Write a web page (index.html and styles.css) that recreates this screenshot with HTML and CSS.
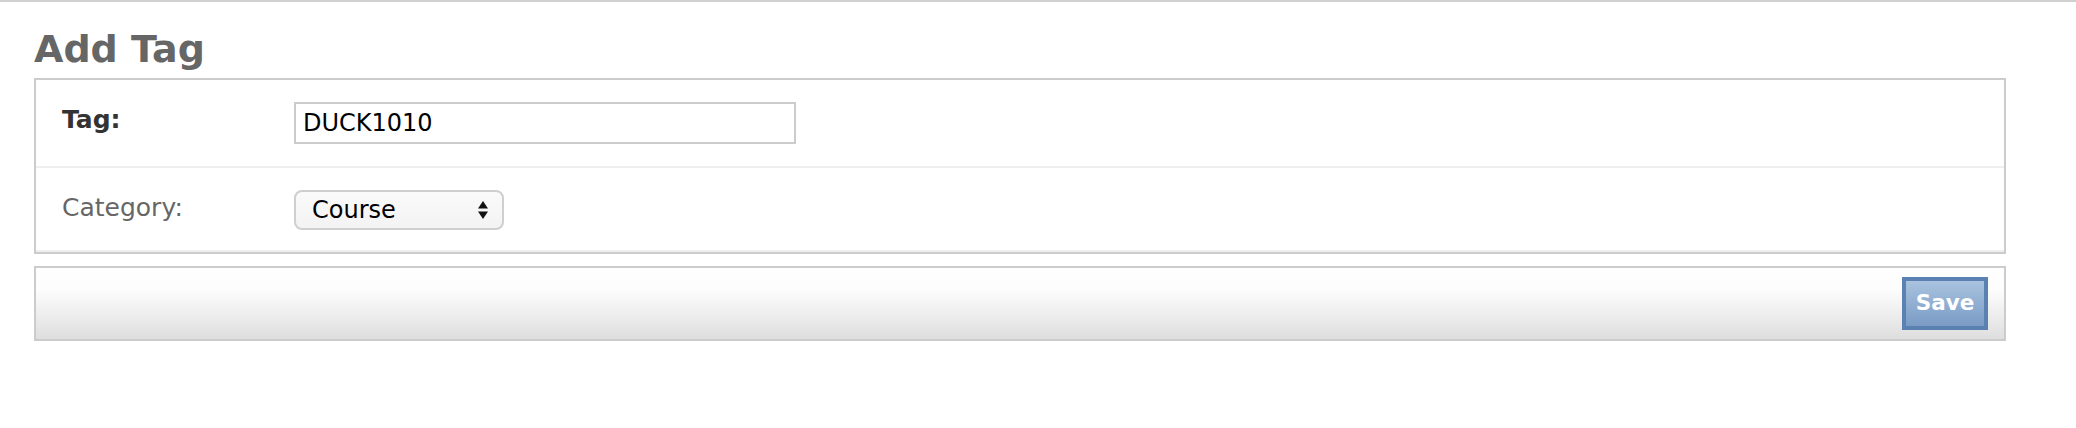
FILE: index.html
```html
<!DOCTYPE html>
<html lang="en">
<head>
<meta charset="utf-8">
<title>Add Tag</title>
<link rel="stylesheet" href="styles.css">
</head>
<body>
<div class="topbar"></div>
<div class="content">
  <h1 class="title">Add Tag</h1>
  <form class="tag-form">
    <fieldset class="module">
      <div class="form-row">
        <label class="field-label required" for="id_tag">Tag:</label>
        <input class="text-input" id="id_tag" type="text" value="DUCK1010">
      </div>
      <div class="form-row form-row-last">
        <label class="field-label" for="id_category">Category:</label>
        <div class="select-box" id="id_category">
          <span class="select-value">Course</span>
          <svg class="select-arrows" width="10" height="18" viewBox="0 0 10 18">
            <path d="M5 0 L10 7.5 L0 7.5 Z" fill="#111"/>
            <path d="M0 10.5 L10 10.5 L5 18 Z" fill="#111"/>
          </svg>
        </div>
      </div>
    </fieldset>
    <div class="submit-row">
      <button class="save-button" type="button">Save</button>
    </div>
  </form>
</div>
</body>
</html>
```

FILE: styles.css
```css
html, body {
  margin: 0;
  padding: 0;
  background: #fff;
}

body {
  font-family: "DejaVu Sans", "Liberation Sans", sans-serif;
  color: #333;
}

.topbar {
  height: 2px;
  background: #d0d0d0;
}

.content {
  padding: 0 70px 0 34px;
}

.title {
  margin: 25px 0 7px 0;
  font-size: 38px;
  line-height: 44px;
  font-weight: bold;
  color: #666;
}

.tag-form {
  margin: 0;
}

.module {
  margin: 0;
  padding: 0;
  border: 2px solid #ccc;
  min-width: 0;
}

.form-row {
  display: flex;
  align-items: flex-start;
  padding: 22px 26px;
  border-bottom: 2px solid #eee;
}

.form-row-last {
  padding-bottom: 20px;
}

.field-label {
  width: 232px;
  flex: none;
  padding-top: 3px;
  font-size: 25px;
  line-height: 30px;
  color: #666;
}

.field-label.required {
  font-weight: bold;
  color: #333;
}

.text-input {
  box-sizing: border-box;
  width: 502px;
  height: 42px;
  margin: 0;
  padding: 0 7px;
  border: 2px solid #ccc;
  font-family: "DejaVu Sans", sans-serif;
  font-size: 24px;
  color: #000;
  background: #fff;
  outline: none;
}

.select-box {
  box-sizing: border-box;
  width: 210px;
  height: 40px;
  display: flex;
  align-items: center;
  justify-content: space-between;
  padding: 0 14px 0 16px;
  border: 2px solid #cfcfcf;
  border-radius: 8px;
  background: linear-gradient(#fafafa, #f3f3f3);
  font-size: 24px;
  color: #000;
}

.select-value {
  line-height: 28px;
}

.select-arrows {
  display: block;
}

.submit-row {
  margin-top: 12px;
  padding: 9px 16px 9px 16px;
  border: 2px solid #ccc;
  background: linear-gradient(#ffffff 0%, #fdfdfd 30%, #dedede 100%);
  display: flex;
  justify-content: flex-end;
}

.save-button {
  box-sizing: border-box;
  width: 86px;
  height: 53px;
  margin: 0;
  padding: 0 0 1px 0;
  border: 4px solid #5b80b2;
  background: linear-gradient(#a9c3df, #7a9bc5);
  color: #fff;
  font-family: "DejaVu Sans", sans-serif;
  font-weight: bold;
  font-size: 21.5px;
  line-height: 24px;
  text-align: center;
  cursor: pointer;
}
```
